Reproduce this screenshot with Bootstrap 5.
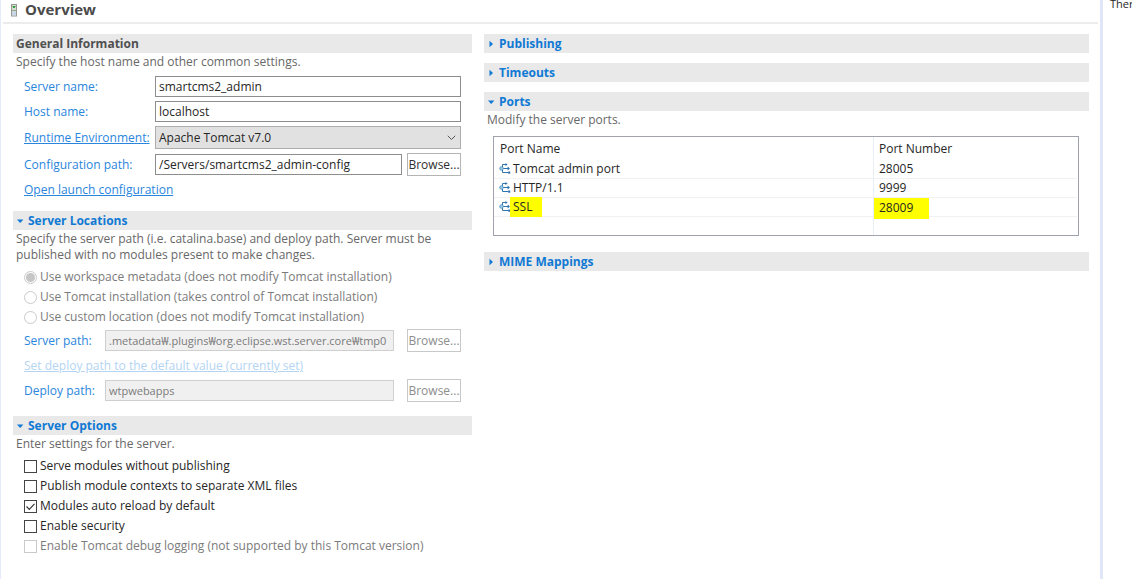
<!DOCTYPE html>
<html lang="en">
<head>
<meta charset="utf-8">
<meta name="viewport" content="width=device-width, initial-scale=1">
<title>Overview</title>
<link href="https://cdn.jsdelivr.net/npm/bootstrap@5.3.0/dist/css/bootstrap.min.css" rel="stylesheet">
<style>
  body { font-family: "Open Sans", "Noto Sans", "Noto Sans CJK KR", sans-serif; font-size: 12px; line-height: 16px; color: #262626; background: #fff; }
  a, .field-label { color: #2a86dc; }
  .editor { border-left: 1px solid #e6ebfa; }
  .side-view { width: 32px; border-left: 3px solid #e0e6f8; padding-left: 7px; font-size: 11px; line-height: 8px; white-space: nowrap; }
  .title-bar { height: 24px; margin-left: 2px; margin-right: 2px; padding-left: 6px; border-bottom: 2px solid #ececec; }
  .title-bar h1 { font-size: 15px; line-height: 18px; color: #4a4a4a; padding-left: 6px; }
  .panes { display: grid; grid-template-columns: 459fr 605fr; gap: 12px; padding: 10px 11px 16px 12px; }
  .pane-col { min-width: 0; }
  .bar { height: 19px; padding-left: 3px; background: #e9e9e9; font-size: 12px; line-height: 19px; font-weight: 700; color: #505050; }
  .bar button { color: #1079d4; font-weight: 700; gap: 4px; }
  .bar svg { width: 8px; height: 8px; }
  .desc { color: #686868; padding: 1px 3px 0; }
  .fields { display: grid; gap: 4px; margin: 6px 11px 11px; }
  .field-label { flex: 0 0 131px; white-space: nowrap; }
  .lower .field-label { flex-basis: 81px; }
  .box.form-control, .box.form-select { height: 21px; min-height: 0; min-width: 0; padding: 0 3px; border: 1px solid #8d8d8d; border-radius: 0; font-size: 12px; line-height: 19px; color: #262626; }
  .box.form-select { height: 23px; background-color: #e1e1e1; border-color: #adadad; background-position: right 4px center; background-size: 9px 9px; background-image: url("data:image/svg+xml,%3csvg xmlns='http://www.w3.org/2000/svg' viewBox='0 0 9 9'%3e%3cpath fill='none' stroke='%23555' d='M.8 2.8l3.7 3.7 3.7-3.7'/%3e%3c/svg%3e"); }
  .box.form-control:disabled { background: #f0f0f0; border-color: #cfcfcf; color: #7b7b7b; font-size: 11px; }
  .browse.btn { flex: 0 0 54px; height: 23px; margin-left: 5px; padding: 0; border: 1px solid #b4b4b4; border-radius: 0; background: #fff; font-size: 12px; line-height: 16px; color: #303030; }
  .browse.btn:disabled { opacity: 1; color: #8d8d8d; border-color: #c8c8c8; }
  .lower .browse.btn { margin-left: 13px; }
  .lower.fields { gap: 3px; margin-top: 2px; margin-bottom: 14px; }
  .link-line { height: 20px; line-height: 20px; }
  .lower .link-line { height: 21px; line-height: 21px; }
  .link-off { color: #b3d4f3; }
  .choices { margin: 4px 11px 0; }
  .choice { height: 20px; gap: 3px; }
  .choice .form-check-input { width: 13px; height: 13px; margin: 0; border: 1px solid #444; background-color: #fff; box-shadow: none; flex: none; }
  .choice .form-check-input[type=checkbox] { border-radius: 0; }
  .choice .form-check-input:checked[type=checkbox] { background-size: 13px 13px; background-image: url("data:image/svg+xml,%3csvg xmlns='http://www.w3.org/2000/svg' viewBox='0 0 13 13'%3e%3cpath fill='none' stroke='%23333' stroke-width='1.2' d='M2.5 6.5l2.8 2.8 5.2-5.4'/%3e%3c/svg%3e"); }
  .choice .form-check-input:disabled { opacity: 1; border-color: #cacaca; }
  .choice .form-check-input:checked[type=radio] { background-size: 13px 13px; background-image: url("data:image/svg+xml,%3csvg xmlns='http://www.w3.org/2000/svg' viewBox='0 0 13 13'%3e%3ccircle cx='6.5' cy='6.5' r='4.6' fill='%23c6c6c6'/%3e%3c/svg%3e"); }
  .choice .form-check-input:disabled ~ label { opacity: 1; color: #7b7b7b; }
  .right-col { display: grid; gap: 10px; align-content: start; }
  .ports { margin: 8px 10px 6px 9px; border: 1px solid #a0a3ad; padding-right: 1px; }
  .ports table { width: 100%; table-layout: fixed; border-collapse: separate; border-spacing: 0; }
  .ports th { height: 23px; padding: 0 6px; font-weight: 400; }
  .ports td { height: 19px; padding: 0 6px 0 5px; border-bottom: 1px solid #f1f1f3; line-height: 18px; }
  .ports tr:last-child td { height: 18px; border-bottom: 0; }
  .ports th + th, .ports td + td { border-left: 1px solid #e9eff6; padding-left: 5px; }
  .ports th:first-child { width: 65%; }
  .ports td svg { width: 12px; height: 12px; margin-right: 2px; flex: none; }
  .hl { background: #ff0; margin: -1px 0 -1px -3px; padding: 1px 10px 1px 3px; }
  .hl-num { margin: -1px 0 -3px -5px; padding: 1px 16px 2px 5px; }
</style>
</head>
<body>
<svg class="d-none" xmlns="http://www.w3.org/2000/svg">
  <symbol id="open" viewBox="0 0 8 8"><path fill="#1079d4" d="M1 2.5h6.4L4.2 6z"/></symbol>
  <symbol id="shut" viewBox="0 0 8 8"><path fill="#1079d4" d="M2.5 .8L6 4 2.5 7.2z"/></symbol>
  <symbol id="port" viewBox="0 0 12 12"><path fill="none" stroke="#2f74b0" d="M3.5 4V1.5h4M3 5.5h7M3.5 7v2.5h6"/><path fill="#2f74b0" d="M6.5 0l2.2 1.5L6.5 3zM8.6 3.6L11 5.5 8.600 7.400zM9.200 8.500h2v2.200h-2z"/><circle cx="2.500" cy="5.500" r="1.800" fill="#9cc8e2" stroke="#4a8fc0" stroke-width=".8"/></symbol>
</svg>
<div class="d-flex min-vh-100">
  <main class="editor flex-grow-1">
    <header class="title-bar d-flex align-items-start">
      <svg class="mt-1 flex-shrink-0" width="10" height="13" viewBox="0 0 10 13" aria-hidden="true">
        <rect x="2.500" y=".5" width="5" height="11.500" fill="#d8dcd7" stroke="#96998f"/>
        <path d="M3 2.500h4M3 6.500h4" stroke="#8fac89"/><path d="M4 2h2v2H4z" fill="#35a844"/><path d="M3 7.500h4v4H3z" fill="#c9d6ea"/>
      </svg>
      <h1 class="m-0 fw-bold">Overview</h1>
    </header>
    <div class="panes">
      <div class="pane-col">
        <section>
          <h2 class="bar m-0">General Information</h2>
          <p class="desc m-0">Specify the host name and other common settings.</p>
          <div class="fields">
            <div class="d-flex align-items-center"><label class="field-label" for="sname">Server name:</label><input class="box form-control" id="sname" value="smartcms2_admin"></div>
            <div class="d-flex align-items-center"><label class="field-label" for="hname">Host name:</label><input class="box form-control" id="hname" value="localhost"></div>
            <div class="d-flex align-items-center"><label class="field-label" for="rt"><a href="#">Runtime Environment:</a></label><select class="box form-select" id="rt"><option>Apache Tomcat v7.0</option></select></div>
            <div class="d-flex align-items-center"><label class="field-label" for="cpath">Configuration path:</label><input class="box form-control" id="cpath" value="/Servers/smartcms2_admin-config"><button type="button" class="browse btn">Browse...</button></div>
            <div class="link-line"><a href="#">Open launch configuration</a></div>
          </div>
        </section>
        <section>
          <h2 class="bar m-0"><button type="button" class="border-0 bg-transparent p-0 d-flex align-items-center" aria-expanded="true"><svg><use href="#open"/></svg>Server Locations</button></h2>
          <p class="desc m-0">Specify the server path (i.e. catalina.base) and deploy path. Server must be<br>published with no modules present to make changes.</p>
          <div class="choices">
            <div class="choice d-flex align-items-center"><input class="form-check-input" type="radio" name="loc" id="l1" checked disabled><label for="l1">Use workspace metadata (does not modify Tomcat installation)</label></div>
            <div class="choice d-flex align-items-center"><input class="form-check-input" type="radio" name="loc" id="l2" disabled><label for="l2">Use Tomcat installation (takes control of Tomcat installation)</label></div>
            <div class="choice d-flex align-items-center"><input class="form-check-input" type="radio" name="loc" id="l3" disabled><label for="l3">Use custom location (does not modify Tomcat installation)</label></div>
          </div>
          <div class="fields lower">
            <div class="d-flex align-items-center"><label class="field-label" for="spath">Server path:</label><input class="box form-control" id="spath" value=".metadata₩.plugins₩org.eclipse.wst.server.core₩tmp0" disabled><button type="button" class="browse btn" disabled>Browse...</button></div>
            <div class="link-line"><a class="link-off" href="#">Set deploy path to the default value (currently set)</a></div>
            <div class="d-flex align-items-center"><label class="field-label" for="dpath">Deploy path:</label><input class="box form-control" id="dpath" value="wtpwebapps" disabled><button type="button" class="browse btn" disabled>Browse...</button></div>
          </div>
        </section>
        <section>
          <h2 class="bar m-0"><button type="button" class="border-0 bg-transparent p-0 d-flex align-items-center" aria-expanded="true"><svg><use href="#open"/></svg>Server Options</button></h2>
          <p class="desc m-0">Enter settings for the server.</p>
          <div class="choices">
            <div class="choice d-flex align-items-center"><input class="form-check-input" type="checkbox" id="o1"><label for="o1">Serve modules without publishing</label></div>
            <div class="choice d-flex align-items-center"><input class="form-check-input" type="checkbox" id="o2"><label for="o2">Publish module contexts to separate XML files</label></div>
            <div class="choice d-flex align-items-center"><input class="form-check-input" type="checkbox" id="o3" checked><label for="o3">Modules auto reload by default</label></div>
            <div class="choice d-flex align-items-center"><input class="form-check-input" type="checkbox" id="o4"><label for="o4">Enable security</label></div>
            <div class="choice d-flex align-items-center"><input class="form-check-input" type="checkbox" id="o5" disabled><label for="o5">Enable Tomcat debug logging (not supported by this Tomcat version)</label></div>
          </div>
        </section>
      </div>
      <div class="pane-col right-col">
        <h2 class="bar m-0"><button type="button" class="border-0 bg-transparent p-0 d-flex align-items-center" aria-expanded="false"><svg><use href="#shut"/></svg>Publishing</button></h2>
        <h2 class="bar m-0"><button type="button" class="border-0 bg-transparent p-0 d-flex align-items-center" aria-expanded="false"><svg><use href="#shut"/></svg>Timeouts</button></h2>
        <section>
          <h2 class="bar m-0"><button type="button" class="border-0 bg-transparent p-0 d-flex align-items-center" aria-expanded="true"><svg><use href="#open"/></svg>Ports</button></h2>
          <p class="desc m-0">Modify the server ports.</p>
          <div class="ports">
            <table>
              <thead><tr><th>Port Name</th><th>Port Number</th></tr></thead>
              <tbody>
                <tr><td><div class="d-flex align-items-center"><svg><use href="#port"/></svg>Tomcat admin port</div></td><td>28005</td></tr>
                <tr><td><div class="d-flex align-items-center"><svg><use href="#port"/></svg>HTTP/1.1</div></td><td>9999</td></tr>
                <tr><td><div class="d-flex align-items-center"><svg><use href="#port"/></svg><span class="hl">SSL</span></div></td><td><div class="d-flex"><span class="hl hl-num">28009</span></div></td></tr>
                <tr><td></td><td></td></tr>
              </tbody>
            </table>
          </div>
        </section>
        <h2 class="bar m-0"><button type="button" class="border-0 bg-transparent p-0 d-flex align-items-center" aria-expanded="false"><svg><use href="#shut"/></svg>MIME Mappings</button></h2>
      </div>
    </div>
  </main>
  <aside class="side-view flex-shrink-0 overflow-hidden">Ther</aside>
</div>
<script src="https://cdn.jsdelivr.net/npm/bootstrap@5.3.0/dist/js/bootstrap.bundle.min.js"></script>
</body>
</html>
